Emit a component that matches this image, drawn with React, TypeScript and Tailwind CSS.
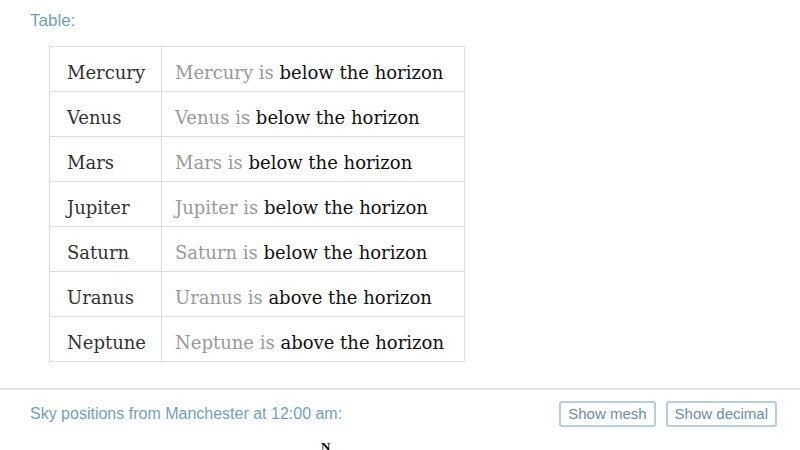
import React from "react";

const rows: [string, string][] = [
  ["Mercury", "below"],
  ["Venus", "below"],
  ["Mars", "below"],
  ["Jupiter", "below"],
  ["Saturn", "below"],
  ["Uranus", "above"],
  ["Neptune", "above"],
];

export default function App() {
  return (
    <div className="w-[800px] h-[450px] overflow-hidden bg-white" style={{ fontFamily: '"Liberation Sans", Arial, sans-serif' }}>
      <div className="pl-[30px] pt-[11px] text-[17px] leading-[20px] text-[#6f9fc2]">Table:</div>
      <div className="pl-[49px] pt-[15px]">
        <table className="border-collapse table-fixed w-[415px]" style={{ fontFamily: '"DejaVu Serif", serif' }}>
          <colgroup>
            <col className="w-[112px]" />
            <col className="w-[303px]" />
          </colgroup>
          <tbody>
            {rows.map(([name, pos]) => (
              <tr key={name} className="h-[45px]">
                <td className="border border-[#dcdcdc] pl-[17px] pr-0 pt-[7px] pb-0 text-[18px] text-[#333] whitespace-nowrap">{name}</td>
                <td className="border border-[#dcdcdc] pl-[13px] pr-0 pt-[7px] pb-0 text-[18px] whitespace-nowrap">
                  <span className="text-[#999]">{name} is </span>
                  <span className="text-[#111]">{pos} the horizon</span>
                </td>
              </tr>
            ))}
          </tbody>
        </table>
      </div>
      <div className="mt-[26px] border-t-2 border-[#e3e3e3]" />
      <div className="flex items-center justify-between pl-[30px] pr-[23px] pt-[11px]">
        <div className="text-[16px] text-[#6f9fc2]">Sky positions from Manchester at 12:00 am:</div>
        <div className="flex gap-[10px]">
          <button className="h-[26px] px-[7px] border-2 border-[#b4d0de] rounded-[3px] text-[15px] text-[#6d8ea3] bg-white">Show mesh</button>
          <button className="h-[26px] px-[7px] border-2 border-[#b4d0de] rounded-[3px] text-[15px] text-[#6d8ea3] bg-white">Show decimal</button>
        </div>
      </div>
      <div className="pl-[321px] pt-[10px] text-[13px] font-bold" style={{ fontFamily: '"Liberation Serif", serif' }}>N</div>
    </div>
  );
}
